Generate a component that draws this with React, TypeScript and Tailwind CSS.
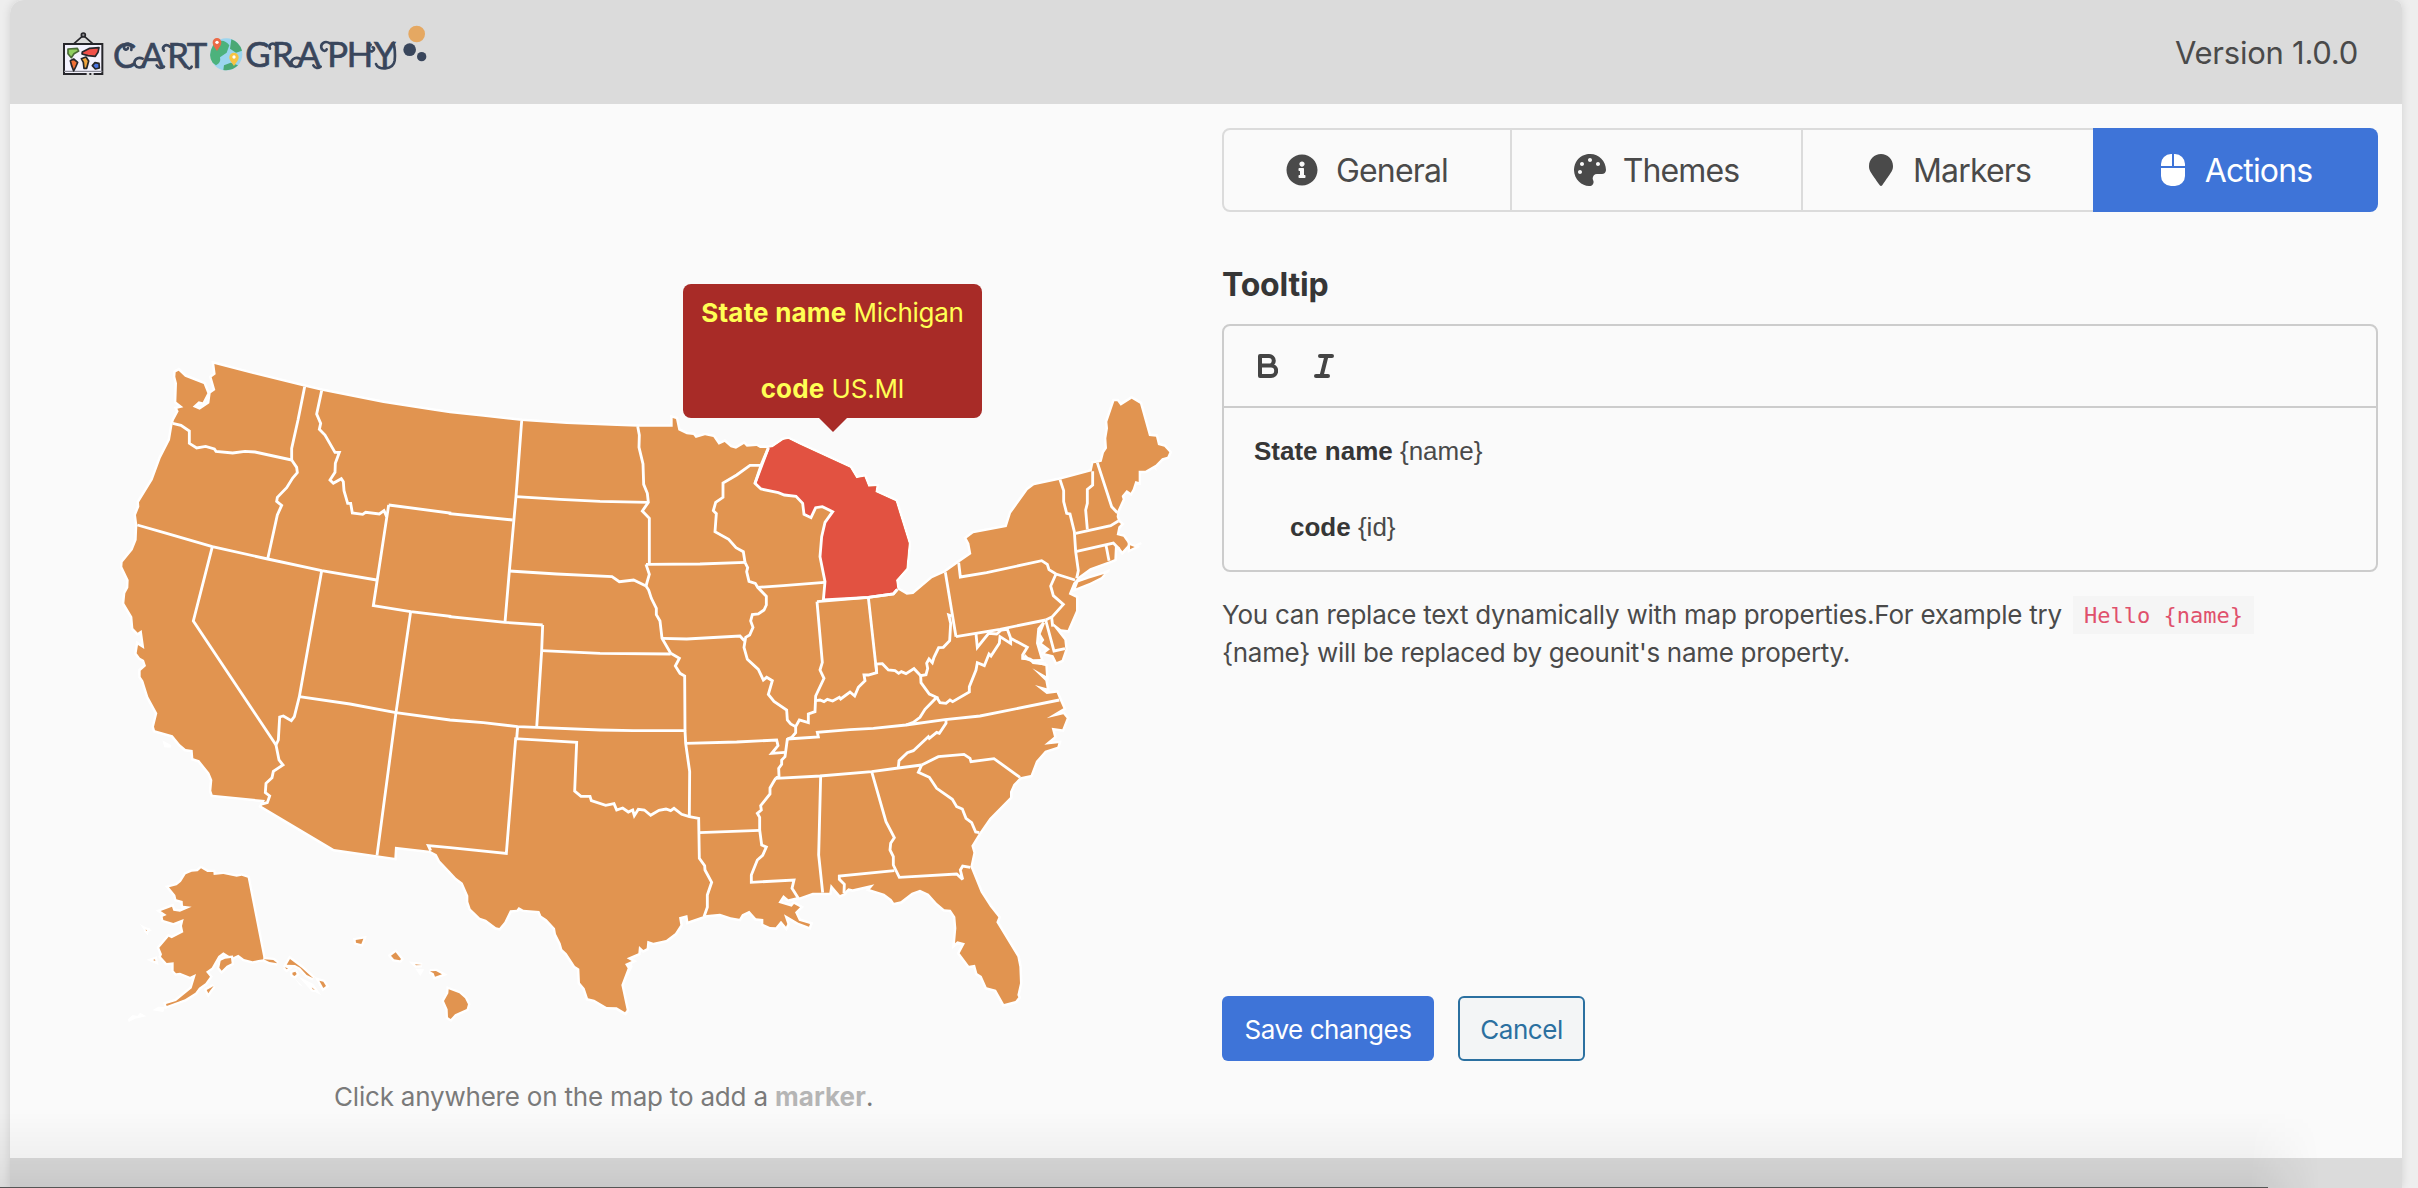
import React from "react";
import { FaInfoCircle, FaPalette, FaMapMarker, FaMouse } from "react-icons/fa";

/* Map geometry is stored in tiles. Each tile has an origin in page pixels and
   lists its points in thirds of a pixel. */
type Tile = "A" | "B" | "C" | "D" | "E" | "F";
type Piece = [Tile, string];

const ORIGIN: Record<Tile, [number, number]> = {
  A: [100, 340],
  B: [450, 360],
  C: [800, 360],
  D: [100, 700],
  E: [450, 700],
  F: [780, 680],
};
const MAP_X = 100;
const MAP_Y = 340;

const points = (pieces: Piece[]) =>
  pieces
    .map(([tile, text]) => {
      const [ox, oy] = ORIGIN[tile];
      return text
        .trim()
        .split(/\s+/)
        .map((pair) => {
          const [x, y] = pair.split(",").map(Number);
          return `${(ox - MAP_X) * 3 + x},${(oy - MAP_Y) * 3 + y}`;
        })
        .join(" ");
    })
    .join(" ");

const MAINLAND: Piece[] = [
  ["A", "343,72 450,100 614,140 665,152 850,189 1000,212"],
  ["B", "0,160 100,170 215,183 350,192 500,198 563,200 668,200 668,174 678,177 685,211 710,223 730,225 737,234 765,226 790,231 806,254 824,246 842,262 858,266 882,252 890,260 920,258 930,264 955,264 968,262 1000,240 1015,237 1050,254"],
  ["C", "150,323 169,355 193,350 205,380 229,379 226,396 287,424 326,550 319,625 288,660 292,688 320,704 340,702 396,655 436,637 476,608 514,582 508,550 500,535 520,520 620,501 633,460 683,390 702,376 780,359 875,334 880,310 892,308 905,305 912,278 921,265 919,235 924,205 922,185 943,124 952,124 962,137 995,116 1020,131 1047,228 1068,230 1074,255 1093,260 1108,277 1102,290 1086,295 1067,314 1036,332 1016,332 1016,366 1006,363 998,388 992,398 980,390 965,408 968,418 952,453 950,470 955,485 963,492 955,500 950,525 970,530 986,553 967,574 958,562 945,556 943,598 930,603 870,625 835,650 831,656 820,668 806,703 828,713 828,752 803,810 783,808 760,790 760,798 793,840 796,868 785,900 770,906 760,886 735,880 750,868 726,850 733,840 722,822 735,790 728,785 712,805 708,850 722,897 700,898 685,892 675,882 668,896 700,908 736,918 738,948 697,925 736,962 740,985 705,975 740,1002 770,998 778,1018 790,1045 740,1075 790,1063 800,1075 787,1108 755,1103 762,1130 733,1154 775,1150 772,1160"],
  ["F", "795,212 768,243 752,285 720,292 700,313 690,335 690,352 628,415 598,458 574,497 580,518 571,560 602,637 630,680 655,712 649,727 712,830 718,860 720,910 712,945 715,952 706,963 672,972 648,929 620,922 605,888 592,880 585,854 567,857 539,820 555,790 532,784 525,790 529,745 526,710 512,689 493,688 470,668 446,641 420,629 395,638 362,664 342,668 335,658 313,641 270,628 283,613 218,628 205,625 197,632 192,640 180,645 160,622 152,612 148,638 128,638 98,638 60,652"],
  ["E", "1040,592 1015,598 1000,585 985,608 1025,620 1032,612 1050,622 1035,637 1047,662 1080,672 1077,680 1045,668 1002,643 1012,672 1008,680 993,662 977,682 960,681 940,672 940,657 918,655 898,632 876,643 868,656 842,652 810,641 770,645 750,652 715,664 712,645 687,652 691,675 675,700 648,720 610,728 592,722 590,745 580,750 567,738 565,760 530,775 545,783 525,792 533,805 514,855 530,930 525,937 500,922 470,921 433,899 414,895 404,865 390,848 388,806 375,798 350,760 337,748 332,730 318,702 315,685 290,658 274,647 268,633 220,629 206,621 200,629 180,631 163,666 148,684 138,682 108,659 90,653 62,626 55,605 55,587 38,548 18,533 0,514"],
  ["D", "1020,482 1010,463 990,452 885,440 883,473 702,447 485,318 495,300 338,284 334,272 337,240 328,218 298,181 280,175 278,150 257,147 240,133 218,106 165,91 162,80 172,40"],
  ["A", "145,1070 130,1022 122,1010 122,992 138,978 132,960 120,953 110,940 114,915 133,927 125,870 113,878 100,865 97,830 73,790 76,760 85,743 86,720 67,680 68,667 98,630 110,600 112,555 108,525 118,500 117,487 158,420 182,355 210,300 218,252 222,240 236,214 232,206 250,202 229,185 231,130 226,110 227,97 236,92 255,110 311,132 322,160 308,187 296,184 278,200 299,209 328,190 332,160 346,150 335,112 347,103"],
];

const MICHIGAN: Piece[] = [
  ["B", "955,264 968,262 1000,240 1015,237 1050,254"],
  ["C", "150,323 169,355 193,350 205,380 229,379 226,396 287,424 326,550 319,625 288,660 292,688 280,702 205,712 70,720 75,665 60,590 65,530 75,487 98,455 67,440 47,443 33,473 12,463 8,430"],
  ["B", "1038,409 1003,405 985,398 933,387 915,370"],
];

const BORDERS: Piece[][] = [
  [["A", "614,140 594,240 575,325 575,360"]],
  [["A", "218,250 243,256 268,273 268,310 290,324 317,319 343,327 348,334 398,339 435,334 465,336 575,360"]],
  [["A", "575,360 590,382 592,398 578,414 560,443 532,472 530,484 545,496 532,525 503,657"]],
  [["A", "112,555 200,580 337,620 503,657 665,692 830,720"]],
  [["A", "337,620 280,843 528,1215"]],
  [["A", "665,152 650,222 662,250 658,268 675,285 705,337 718,337 706,370 705,397 690,420 700,430 724,416 730,425 732,452 743,490 752,490 757,519 788,523 797,517 838,522 852,512 860,530"]],
  [["A", "866,495 1050,519"], ["B", "0,461 188,480"]],
  [["A", "866,495 820,797 932,815 1050,829"], ["B", "0,770 165,787 278,795"]],
  [["A", "665,692 598,1070 583,1130 574,1142 550,1128 539,1131 535,1200 528,1215"]],
  [["A", "598,1070 750,1092 888,1118"], ["B", "0,1080 100,1088 203,1100 260,1102 450,1110 550,1112 705,1112"]],
  [["A", "932,815 888,1118"], ["D", "831,466"]],
  [["D", "528,135 537,180 549,195 520,214 516,233 498,250 496,278 509,288 502,308 485,312"]],
  [["B", "215,183 198,410 178,633 165,787"]],
  [["B", "198,410 330,418 450,424 595,427"]],
  [["B", "563,199 568,225 567,262 579,312 581,373 592,400 595,427 577,453 598,475 598,612"]],
  [["B", "178,633 320,642 486,650 508,665 551,660 588,678"]],
  [["B", "588,613 750,612 885,607"]],
  [["B", "588,613 598,643 588,678"]],
  [["B", "588,678 596,690 604,715 619,745 619,764 630,783 636,835 662,880 688,895 676,918 690,940 704,948 705,1112 707,1150"], ["E", "719,215 718,348"]],
  [["B", "636,835 710,837 870,828 883,842"]],
  [["B", "275,872 450,880 662,882"]],
  [["B", "278,795 275,872 260,1102"]],
  [["B", "955,264 933,316 900,316 860,345 819,369 819,412 797,427 790,452 799,461 795,515 836,538 858,563 880,575 885,607"]],
  [["B", "933,316 915,370"]],
  [["B", "885,607 893,623 890,635 897,664 916,670 923,682 949,709 949,735 942,750 925,762 907,764 902,783 909,802 899,825 887,832 882,862 892,898 925,928 940,960 950,952 967,962 955,1003 972,1024 1010,1050 1012,1080 1022,1092 1037,1100 1048,1080 1075,1088 1075,1062 1095,1055 1097,1008 1122,955 1110,930 1117,907 1101,725"]],
  [["B", "923,682 1000,677 1123,667"]],
  [["B", "1101,725"], ["C", "205,712 280,702 292,688"]],
  [["C", "205,712 230,938"]],
  [["C", "47,1022 60,1020 72,1025 82,1018 98,1023 118,1012 122,1017 150,996 164,1008 175,982 195,962 192,945 205,945 230,938 228,912 247,911 265,930 285,932 296,940 304,935 318,941 342,926 362,947 378,944 383,925 380,910 387,897 397,908 402,892 416,863 430,862 449,842 452,790 446,765 455,768"]],
  [["C", "436,637 468,830"]],
  [["C", "476,608 481,651 560,638 725,602 742,613 747,629 768,642 825,660"]],
  [["C", "768,642 752,678 760,707 790,733 757,770 737,780"]],
  [["C", "468,830 600,808 737,780"]],
  [["C", "737,780 762,873 795,866"]],
  [["C", "755,772 758,800"]],
  [["C", "528,822 532,862 566,820 590,822 604,810 622,808 632,835 682,862 668,885 668,895 690,897 700,908 738,912"]],
  [["C", "632,835 632,850 600,830 598,850 573,888 567,882 553,917 532,908 528,930 508,980 508,996 458,1025 450,1020 438,1030 420,1028 410,1012"]],
  [["C", "362,947 363,968 388,1002 410,1012 375,1048 360,1072 340,1087 318,1095"]],
  [["C", "-38,1137 55,1131 52,1117 150,1109 220,1105 318,1095 435,1079 540,1068 778,1020"]],
  [["C", "438,1079 438,1090 418,1120 410,1117 388,1135 385,1130 340,1172 322,1178 297,1202 295,1222"]],
  [["E", "977,235 1112,228"], ["F", "120,288 275,275 355,264 425,255"]],
  [["F", "425,255 475,230 552,223 570,235 573,245 642,236 720,292"]],
  [["F", "425,255 415,277 448,292 470,325 517,358 530,380 547,387 558,415 575,428 587,456 598,458"]],
  [["F", "275,275 318,425 343,473 332,490 330,510 340,530 340,555 358,592 530,582 548,598 541,570 548,558 571,562"]],
  [["F", "343,572 178,588 178,598 193,613 192,640"]],
  [["F", "122,288 116,525 128,638"]],
  [["E", "977,235 960,264 960,282 932,317 934,330 922,340 929,352 929,390 935,435 949,441 938,466 922,480 904,525 904,547 1032,540 1026,565 1045,595"]],
  [["E", "1037,80 1037,98 1025,112 1012,118 1005,170 995,180 995,193 986,205 987,228 977,235"]],
  [["E", "707,130 860,126 980,120 984,137 965,160 1005,157"]],
  [["E", "748,398 929,391"]],
  [["E", "203,80 200,116"]],
  [["D", "992,452 985,437 1050,443"], ["E", "169,460 197,116 380,127 374,273 393,289 420,289 424,302 467,316 492,311 500,330 518,324 535,336 548,330 553,347 565,328 583,330 602,346 627,331 648,327 662,332 672,325 695,343 718,350 746,355 748,475 764,497 765,510 785,547 772,585 772,622 762,650"]],
  [["C", "780,359 791,392 791,425 800,460 810,462 823,515 827,575 835,632 830,655"]],
  [["C", "878,334 878,375 862,388 862,430 857,450 862,508"]],
  [["C", "892,308 935,440 952,458"]],
  [["C", "827,520 932,497 955,483"]],
  [["C", "827,575 940,549 958,568"]],
  [["C", "918,556 927,602"]],
];

const ISLANDS: Piece[] = [
  // Long Island and Cape Cod
  ["C", "828,685 835,667 870,655 912,642 903,652 870,668"],
  ["C", "990,556 1004,561 990,568"],
  // Alaska
  ["D", "303,505 322,516 340,516 341,525 370,522 410,530 425,527 443,533 491,778 475,780 458,784 432,777 415,764 396,773 370,757 355,768 335,803 318,815 330,830 316,850 297,863 286,878 255,898 235,905 200,918 198,912 228,903 275,865 288,822 270,830 240,818 228,820 221,812 221,787 200,789 183,770 186,763 178,743 206,710 215,715 250,697 246,678 251,657 220,669 190,660 188,650 200,645 182,633 216,620 220,632 240,635 275,620 249,617 248,603 229,598 226,585 207,562 230,556 243,545 257,523 275,515 293,514"],
  ["D", "375,776 393,774 395,790 380,797 365,812 358,803 362,782"],
  ["D", "491,778 520,780 532,790 508,786"],
  ["D", "560,794 570,777 605,803 640,835 620,825 600,803 585,795"],
  ["D", "658,842 670,845 678,858 670,864"],
  ["D", "577,818 586,815 590,822 584,828 578,825"],
  ["D", "635,862 645,870 638,868"],
  ["D", "554,802 564,805 560,808"],
  ["D", "320,870 341,858 330,872 325,880"],
  ["D", "136,689 141,690 140,693"],
  ["D", "159,780 165,778 166,783"],
  // Hawaii
  ["D", "767,720 790,716 784,732 768,728"],
  ["D", "873,767 887,757 903,777 900,781 882,778"],
  ["D", "945,793 966,795 948,796"],
  ["D", "990,814 1008,813 1026,823 1005,830 1001,820"],
  ["D", "1046,868 1078,880 1095,895 1104,913 1100,927 1065,943 1052,957 1044,952 1043,928 1032,903 1045,880"],
];

/* Islets too small to keep any fill: only their outline shows. */
const ISLETS: Piece[] = [
  ["D", "187,121 214,136 212,143 193,142"],
  ["D", "119,671 130,678 156,691 138,699"],
  ["D", "84,958 98,945 112,948 120,938 139,949 105,956 86,966"],
  ["D", "157,931 175,920 195,921 190,936"],
  ["D", "946,806 973,808 961,828"],
  ["D", "585,836 610,860 598,854"],
  ["D", "596,830 640,852 664,886 630,868"],
  ["C", "1058,322 1068,320 1070,334"],
  ["C", "1004,555 1022,546 1026,552 1010,560"],
  ["C", "900,640 930,626 928,636 910,646"],
  ["E", "527,795 545,790 548,800 534,828"],
];

function UsaMap() {
  return (
    <svg viewBox="0 0 3270 2070" className="block h-[690px] w-[1090px]">
      <g strokeLinejoin="miter" strokeMiterlimit={3}>
        {ISLETS.map((p, i) => (
          <polygon key={i} points={points([p])} fill="#fff" />
        ))}
        <polygon
          points={points(MAINLAND)}
          fill="#e19450"
          stroke="#fff"
          strokeWidth={15}
          style={{ paintOrder: "stroke" }}
        />
        {ISLANDS.map((p, i) => (
          <polygon
            key={i}
            points={points([p])}
            fill="#e19450"
            stroke="#fff"
            strokeWidth={14}
            style={{ paintOrder: "stroke" }}
          />
        ))}
        <polygon points={points(MICHIGAN)} fill="#e25241" />
        <polyline
          points={points([
            ["C", "292,688 280,702 205,712 70,720 75,665 60,590 65,530 75,487 98,455 67,440 47,443 33,473 12,463 8,430"],
            ["B", "1038,409 1003,405 985,398 933,387 915,370 955,264"],
          ])}
          fill="none"
          stroke="#fff"
          strokeWidth={8.5}
        />
        {BORDERS.map((b, i) => (
          <polyline key={i} points={points(b)} fill="none" stroke="#fff" strokeWidth={8.5} />
        ))}
      </g>
    </svg>
  );
}

function Logo() {
  return (
    <svg viewBox="180 60 1110 180" className="block h-[60px] w-[370px]">
      {/* hanging wall map */}
      <path d="M222 131 L250 106 L278 131" fill="none" stroke="#26262a" strokeWidth="5" />
      <circle cx="250" cy="105" r="6" fill="#8a8a8e" stroke="#26262a" strokeWidth="5" />
      <rect x="192" y="132" width="115" height="90" fill="#f3f2fd" stroke="#26262a" strokeWidth="6" />
      <path d="M192 214h115" stroke="#8c8c96" strokeWidth="4" />
      <path d="M260 222h8M274 222h7" stroke="#dbdbdb" strokeWidth="7" />
      <g stroke="#26262a" strokeWidth="5" strokeLinejoin="round">
        <path d="M204 147l28-2 4 8-14 8-8 12-10-12z" fill="#8fce5f" stroke="#4b6b38" />
        <path d="M247 156l22-11 28-2-3 14-8 12-22-2-18-5z" fill="#f0504a" />
        <path d="M211 182l10-5 12 10-6 14-6 12-6-16z" fill="#f07036" />
        <path d="M244 176l14-5 8 12-6 22-8 0-2-18z" fill="#f0a53c" />
        <path d="M277 197l8-9 12 2 1 14-12 3z" fill="#4a74e0" />
      </g>
      {/* lettering */}
      <g fill="#39465c" stroke="#39465c" strokeWidth="2" fontFamily="Lato, 'Open Sans', sans-serif" fontSize="104">
        <text x="339 422 502 560" y="203">CART</text>
        <text x="736 816 892 982 1040 1122" y="202">GRAPHY</text>
      </g>
      <g fill="none" stroke="#39465c" strokeWidth="8" strokeLinecap="round">
        <path d="M394 150c6-22-22-26-22-8 0 8 10 10 12 2" />
        <path d="M428 176c-16-8-30 6-22 20 6 10 22 8 26-4M470 196c6 10 14 10 22 4" />
        <path d="M510 140c-14-12-26 2-18 12M562 202c4 6 10 4 13-2" />
        <path d="M900 176c-16-8-32 6-24 18 6 10 22 8 26-4M940 196c6 10 14 10 22 4" />
        <path d="M826 134c-10-8-22 2-16 12M990 130c-16-10-32 2-24 18 4 6 12 6 14 0" />
        <path d="M1112 134c-10 4-8 22 4 20 8-2 8-12 2-12M1128 192c4 18 52 20 56-10 2-20 0-40-4-54" />
      </g>
      {/* globe */}
      <circle cx="679" cy="163" r="48" fill="#9bd5ef" />
      <path d="M640 134q-18 32-2 54l10 8q16-8 12-24l20-14 8-22q-20-26-48-2z" fill="#4cb27c" />
      <path d="M694 118q24 8 32 34l-18 6-18-12zM672 196l20-8 22 8q-18 18-44 14z" fill="#4aa874" />
      <path d="M651 153c-9-13-13-18-13-26a13 13 0 0 1 26 0c0 8-4 13-13 26z" fill="#ec6a47" />
      <circle cx="651" cy="127" r="5" fill="#fff" />
      <path d="M702 198c-9-13-14-18-14-26a14 14 0 0 1 28 0c0 8-5 13-14 26z" fill="#f6c443" />
      <circle cx="702" cy="171" r="5" fill="#fff" />
      {/* dots */}
      <circle cx="1250" cy="102" r="25" fill="#e5a862" />
      <circle cx="1229" cy="149" r="19" fill="#39465c" />
      <circle cx="1265" cy="170" r="14" fill="#39465c" />
    </svg>
  );
}

function Tab({ icon, label, className }: { icon: React.ReactNode; label: string; className: string }) {
  return (
    <button className={`flex items-center justify-center text-[32px] leading-none tracking-[-0.85px] ${className}`}>
      {icon}
      <span className="pt-0.5">{label}</span>
    </button>
  );
}

export default function App() {
  return (
    <div className="relative h-[1188px] w-[2418px] overflow-hidden bg-[#eeeeee] pr-4 pl-2.5 font-['Inter','Liberation_Sans',sans-serif] text-[#4a4a4a]">
      <div className="flex h-full flex-col rounded-tl-[14px] rounded-tr-lg bg-[#fafafa] shadow-[0_0_10px_rgba(0,0,0,0.12)]">
        <header className="flex h-[104px] shrink-0 items-center justify-between rounded-tl-[14px] rounded-tr-lg bg-[#dbdbdb] pr-[44px] pl-[50px]">
          <div className="-mt-1">
            <Logo />
          </div>
          <div className="pt-0.5 text-[31px] tracking-[-0.25px]">Version 1.0.0</div>
        </header>

        <main className="flex h-[1054px] shrink-0">
          <section className="flex w-[1212px] flex-col pt-[236px] pl-[90px]">
            <div className="relative">
              <UsaMap />
              <div className="absolute top-[-56px] left-[583px] flex h-[134px] w-[299px] flex-col items-center rounded-lg bg-[#a82b27] pt-[10px] text-[26px] leading-[38px] tracking-[-0.25px] whitespace-nowrap text-[#ffff54]">
                <div><b className="tracking-[0.2px]">State name</b> Michigan</div>
                <div className="mt-[38px]"><b className="tracking-[0.2px]">code</b> US.MI</div>
                <div className="absolute top-full h-0 w-0 border-x-[14px] border-t-[14px] border-x-transparent border-t-[#a82b27]" />
              </div>
            </div>
            <p className="mt-[48px] pl-[234px] text-[26px] leading-[38px] tracking-[-0.2px] text-[#7a7a7a]">
              Click anywhere on the map to add a <b className="tracking-[0.1px] text-[#b5b5b5]">marker</b>.
            </p>
          </section>

          <section className="flex w-[1156px] flex-col pt-6">
            <nav className="flex h-[84px] rounded-lg">
              <Tab className="w-[290px] gap-[18px] rounded-l-lg border-2 border-[#dbdbdb]" icon={<FaInfoCircle size={32} />} label="General" />
              <Tab className="w-[291px] gap-[17px] border-y-2 border-r-2 border-[#dbdbdb]" icon={<FaPalette size={32} />} label="Themes" />
              <Tab className="w-[290px] gap-[20px] border-y-2 border-[#dbdbdb] pl-1" icon={<FaMapMarker size={32} className="w-6" />} label="Markers" />
              <Tab className="w-[285px] gap-[20px] rounded-r-lg bg-[#3e74d8] pl-0.5 text-white" icon={<FaMouse size={32} className="w-6" />} label="Actions" />
            </nav>

            <h2 className="mt-[49px] h-[47px] text-[32px] leading-[48px] font-bold tracking-[-0.2px] text-[#363636]">Tooltip</h2>

            <div className="mt-[16px] flex h-[248px] flex-col rounded-lg border-2 border-[#cccccc]">
              <div className="flex h-[82px] items-center gap-9 border-b-2 border-[#cccccc] pl-[34px] text-[#444]">
                <svg viewBox="0 0 20 24" className="h-6 w-5">
                  <path d="M2 2h9a4.7 4.7 0 0 1 0 9.600H2zM2 11.600h11a5.100 5.100 0 0 1 0 10.400H2z" fill="none" stroke="currentColor" strokeWidth="4" strokeLinejoin="round" />
                </svg>
                <svg viewBox="0 0 20 24" className="h-6 w-5">
                  <path d="M6 2h12M2 22h12M12.500 2l-5 20" fill="none" stroke="currentColor" strokeWidth="4" strokeLinecap="round" />
                </svg>
              </div>
              <div className="flex flex-col pt-[24px] pl-[30px] font-['Liberation_Sans',sans-serif] text-[26px] leading-[38px]">
                <div><b className="text-[#363636]">State name</b> {"{name}"}</div>
                <div className="mt-[38px] pl-9"><b className="text-[#363636]">code</b> {"{id}"}</div>
              </div>
            </div>

            <p className="mt-[24px] text-[26px] leading-[38px] tracking-[-0.24px] whitespace-nowrap">
              You can replace text dynamically with map properties.For example try{" "}
              <code className="ml-1 inline-block h-[38px] bg-[#f5f5f5] px-[11px] pt-px align-top font-['DejaVu_Sans_Mono',monospace] text-[22px] tracking-normal text-[#e0506c]">Hello {"{name}"}</code>
              <br />
              <span className="tracking-[-0.3px]">{"{name}"} will be replaced by geounit's name property.</span>
            </p>

            <div className="mt-[324px] flex h-[65px] gap-6 text-[26px] tracking-[-0.45px]">
              <button className="w-[212px] rounded-md bg-[#3e74d8] pt-0.5 text-white">Save changes</button>
              <button className="w-[127px] rounded-md border-2 border-[#2b70a0] bg-[#f3f5f6] pt-0.5 text-[#2b70a0]">Cancel</button>
            </div>
          </section>
        </main>

        <footer className="flex-1 bg-[#dbdbdb]" />
      </div>

      {/* shade cast by the window edge below */}
      <div className="absolute bottom-0 left-0 h-[76px] w-[2320px] bg-linear-to-b from-transparent via-black/4 via-60% to-black/8 mask-r-from-97%" />
      <div className="absolute bottom-0 left-0 h-px w-[2268px] bg-[#555555]" />
    </div>
  );
}
